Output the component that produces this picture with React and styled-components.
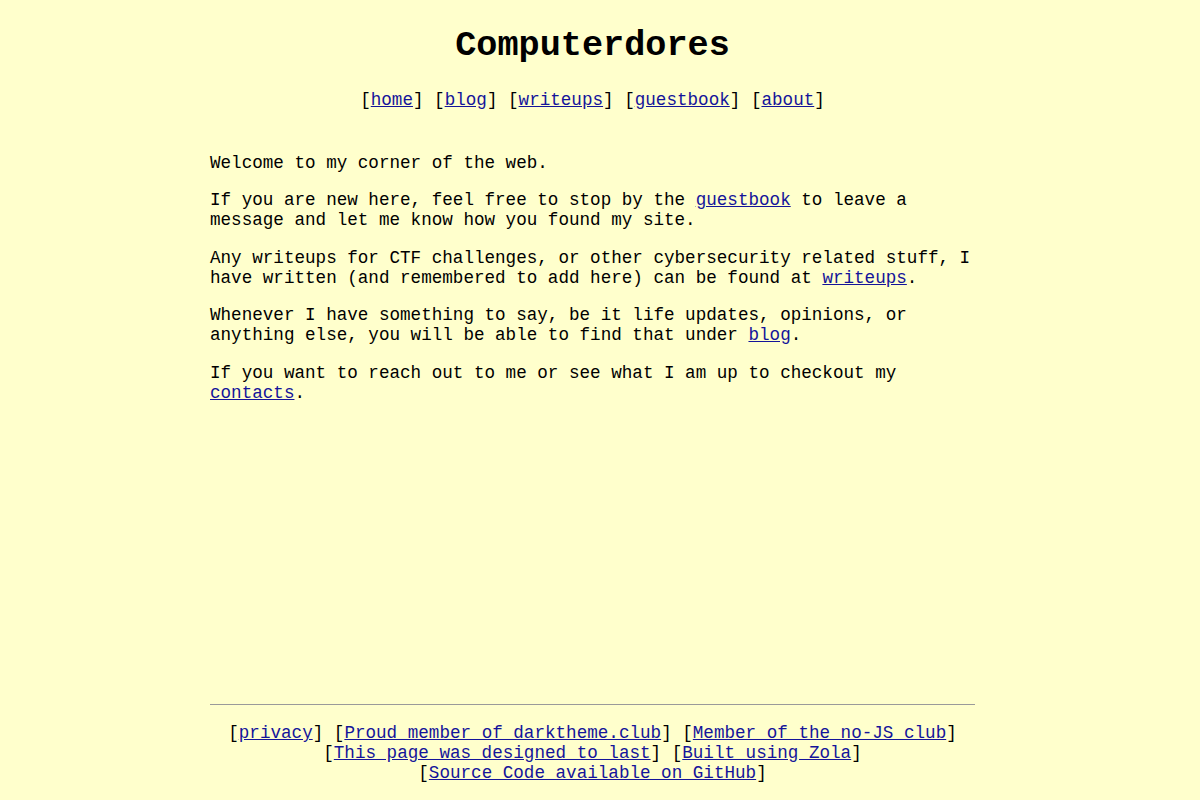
import React from 'react'
import styled, { createGlobalStyle } from 'styled-components'

const GlobalStyle = createGlobalStyle`
  html {
    background: #ffffcc;
  }
  body {
    /* right side leaves room like the scrollbar in the original */
    margin: 8px 23px 8px 8px;
    background: #ffffcc;
    color: #000;
    font-family: "Liberation Mono", "DejaVu Sans Mono", monospace;
    font-size: 17.6px;
  }
`

const Page = styled.div`
  display: flex;
  flex-direction: column;
  min-height: 100vh;
  max-width: 765px;
  margin: 0 auto;
`

const Header = styled.header`
  text-align: center;
  margin-bottom: 42.5px;
`

const Title = styled.h1`
  font-size: 2em;
  font-weight: bold;
  margin: 18px 0 24px;
`

const Nav = styled.nav`
  margin: 0;
`

const Main = styled.main`
  flex: 1;

  p {
    margin: 0 0 17.6px;
  }
`

const Footer = styled.footer`
  text-align: center;
  padding-bottom: 25px;

  hr {
    border: 0;
    border-top: 1px solid #9a9a9a;
    margin: 0 0 18px;
  }

  p {
    margin: 0;
  }
`

const A = styled.a`
  color: #14149a;
  text-decoration: underline;
`

const Item = styled.span`
  white-space: nowrap;
`

const Bracket = ({ href, children }) => (
  <Item>
    [<A href={href}>{children}</A>]
  </Item>
)

const App = () => {
  return (
    <>
      <GlobalStyle />
      <Page>
        <Header>
          <Title>Computerdores</Title>
          <Nav>
            <Bracket href="#home">home</Bracket>{' '}
            <Bracket href="#blog">blog</Bracket>{' '}
            <Bracket href="#writeups">writeups</Bracket>{' '}
            <Bracket href="#guestbook">guestbook</Bracket>{' '}
            <Bracket href="#about">about</Bracket>
          </Nav>
        </Header>

        <Main>
          <p>Welcome to my corner of the web.</p>
          <p>
            If you are new here, feel free to stop by the <A href="#guestbook">guestbook</A> to leave a
            message and let me know how you found my site.
          </p>
          <p>
            Any writeups for CTF challenges, or other cybersecurity related stuff, I have written (and
            remembered to add here) can be found at <A href="#writeups">writeups</A>.
          </p>
          <p>
            Whenever I have something to say, be it life updates, opinions, or anything else, you will
            be able to find that under <A href="#blog">blog</A>.
          </p>
          <p>
            If you want to reach out to me or see what I am up to checkout my{' '}
            <A href="#contacts">contacts</A>.
          </p>
        </Main>

        <Footer>
          <hr />
          <p>
            <Bracket href="#privacy">privacy</Bracket>{' '}
            <Bracket href="#darktheme">Proud member of darktheme.club</Bracket>{' '}
            <Bracket href="#nojs">Member of the no-JS club</Bracket>{' '}
            <Bracket href="#last">This page was designed to last</Bracket>{' '}
            <Bracket href="#zola">Built using Zola</Bracket>{' '}
            <Bracket href="#github">Source Code available on GitHub</Bracket>
          </p>
        </Footer>
      </Page>
    </>
  )
}

export default App
